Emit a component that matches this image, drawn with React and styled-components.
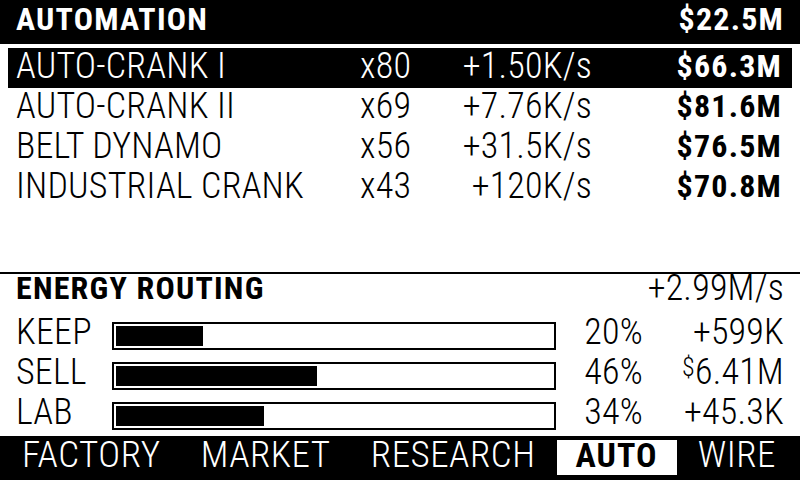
import React from "react";
import styled, { createGlobalStyle } from "styled-components";

const GlobalStyle = createGlobalStyle`
  html, body { margin: 0; padding: 0; background: #fff; }
  body { width: 800px; height: 480px; overflow: hidden; }
`;

const units = [
  { name: "AUTO-CRANK I", count: 80, rate: "+1.50K/s", price: "$66.3M", selected: true },
  { name: "AUTO-CRANK II", count: 69, rate: "+7.76K/s", price: "$81.6M" },
  { name: "BELT DYNAMO", count: 56, rate: "+31.5K/s", price: "$76.5M" },
  { name: "INDUSTRIAL CRANK", count: 43, rate: "+120K/s", price: "$70.8M" },
];

const routes = [
  { label: "KEEP", pct: 20, value: "+599K" },
  { label: "SELL", pct: 46, value: "6.41M", dollar: true },
  { label: "LAB", pct: 34, value: "+45.3K" },
];

const tabs = ["FACTORY", "MARKET", "RESEARCH", "AUTO", "WIRE"];

class App extends React.Component {
  renderUnits = () => {
    return units.map((u) => (
      <UnitRow key={u.name} selected={u.selected}>
        <Thin>{u.name}</Thin>
        <Thin>x{u.count}</Thin>
        <Thin right>{u.rate}</Thin>
        <Bold right>{u.price}</Bold>
      </UnitRow>
    ));
  };

  renderRoutes = () => {
    return routes.map((r) => (
      <RouteRow key={r.label}>
        <Thin>{r.label}</Thin>
        <Bar>
          <Fill style={{ width: `${r.pct}%` }} />
        </Bar>
        <Thin right>{r.pct}%</Thin>
        <Thin right>
          {r.dollar && <SmallDollar>$</SmallDollar>}
          {r.value}
        </Thin>
      </RouteRow>
    ));
  };

  render() {
    return (
      <Screen>
        <GlobalStyle />
        <TitleBar>
          <Bold>AUTOMATION</Bold>
          <Bold>$22.5M</Bold>
        </TitleBar>
        <UnitList>{this.renderUnits()}</UnitList>
        <Rule />
        <Energy>
          <EnergyHead>
            <Bold>ENERGY ROUTING</Bold>
            <Thin>+2.99M/s</Thin>
          </EnergyHead>
          {this.renderRoutes()}
        </Energy>
        <TabBar>
          {tabs.map((t) => (
            <Tab key={t} active={t === "AUTO"}>
              {t}
            </Tab>
          ))}
        </TabBar>
      </Screen>
    );
  }
}

const Screen = styled.div`
  width: 800px;
  height: 480px;
  display: flex;
  flex-direction: column;
  background: #fff;
  color: #000;
  overflow: hidden;
`;

const Thin = styled.span`
  font-family: Roboto, "DejaVu Sans", sans-serif;
  font-weight: 300;
  font-stretch: condensed;
  font-size: 36px;
  letter-spacing: 0.2px;
  line-height: 36px;
  white-space: nowrap;
  text-align: ${(props) => (props.right ? "right" : "left")};
`;

const Bold = styled.span`
  font-family: Roboto, "DejaVu Sans", sans-serif;
  font-weight: 700;
  font-stretch: condensed;
  font-size: 32px;
  letter-spacing: 1.2px;
  line-height: 32px;
  white-space: nowrap;
  text-align: ${(props) => (props.right ? "right" : "left")};
`;

const TitleBar = styled.div`
  height: 44px;
  box-sizing: border-box;
  padding: 0 16px 6px 16px;
  display: flex;
  justify-content: space-between;
  align-items: center;
  background: #000;
  color: #fff;
`;

const UnitList = styled.div`
  flex: 1;
  padding-top: 4px;
  margin: 0 8px;
`;

const UnitRow = styled.div`
  height: 40px;
  box-sizing: border-box;
  padding: 0 10px 7px 8px;
  display: grid;
  grid-template-columns: 344px 80px 152px 1fr;
  align-items: center;
  background: ${(props) => (props.selected ? "#000" : "#fff")};
  color: ${(props) => (props.selected ? "#fff" : "#000")};
`;

const Rule = styled.div`
  height: 2px;
  background: #000;
`;

const Energy = styled.div`
  height: 162px;
  box-sizing: border-box;
  padding: 0 16px;
`;

const EnergyHead = styled.div`
  height: 28px;
  margin-bottom: 12px;
  display: flex;
  justify-content: space-between;
  align-items: center;
`;

const RouteRow = styled.div`
  height: 40px;
  display: grid;
  grid-template-columns: 96px 444px 87px 1fr;
  align-items: start;
`;

const Bar = styled.div`
  margin-top: 8px;
  height: 28px;
  box-sizing: border-box;
  border: 2px solid #000;
  padding: 2px;
`;

const Fill = styled.div`
  height: 100%;
  background: #000;
`;

const SmallDollar = styled.span`
  font-size: 26px;
  vertical-align: top;
  line-height: 26px;
`;

const TabBar = styled.div`
  height: 44px;
  box-sizing: border-box;
  padding: 4px 5px 5px 3px;
  display: flex;
  justify-content: space-between;
  background: #000;
`;

const Tab = styled.div`
  height: 35px;
  box-sizing: border-box;
  padding: 0 19px 5px 19px;
  display: flex;
  align-items: center;
  font-family: Roboto, "DejaVu Sans", sans-serif;
  font-stretch: condensed;
  font-weight: ${(props) => (props.active ? 700 : 300)};
  font-size: ${(props) => (props.active ? "34px" : "37px")};
  letter-spacing: ${(props) => (props.active ? "1px" : "0.5px")};
  line-height: 30px;
  white-space: nowrap;
  background: ${(props) => (props.active ? "#fff" : "#000")};
  color: ${(props) => (props.active ? "#000" : "#fff")};
`;

export default App;
